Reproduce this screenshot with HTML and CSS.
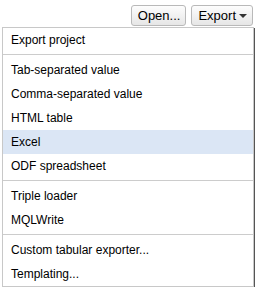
FILE: index.html
```html
<!DOCTYPE html>
<html lang="en">
  <head>
    <meta charset="UTF-8" />
    <title>Export</title>
    <link rel="stylesheet" href="styles.css">
  </head>
  <body>
    <div class="toolbar">
      <button class="btn">Open...</button>
      <button class="btn">Export<span class="caret"></span></button>
    </div>
    <div class="menu">
      <div class="menu-item">Export project</div>
      <hr class="menu-sep" />
      <div class="menu-item">Tab-separated value</div>
      <div class="menu-item">Comma-separated value</div>
      <div class="menu-item">HTML table</div>
      <div class="menu-item active">Excel</div>
      <div class="menu-item">ODF spreadsheet</div>
      <hr class="menu-sep" />
      <div class="menu-item">Triple loader</div>
      <div class="menu-item">MQLWrite</div>
      <hr class="menu-sep" />
      <div class="menu-item">Custom tabular exporter...</div>
      <div class="menu-item">Templating...</div>
    </div>
  </body>
</html>
```

FILE: styles.css
```css
* {
  box-sizing: border-box;
}

body {
  margin: 0;
  font-family: "Liberation Sans", Arial, sans-serif;
  font-size: 12px;
  color: #000;
  background: #fff;
  overflow: hidden;
}

.toolbar {
  display: flex;
  justify-content: flex-end;
  gap: 5px;
  padding: 5px 3px 0 0;
  height: 27px;
}

.btn {
  height: 21px;
  padding: 0 5px 0 6px;
  font-family: inherit;
  font-size: 13px;
  color: #000;
  border: 1px solid #b9b9b9;
  border-radius: 3px;
  background: linear-gradient(#fdfdfd, #e6e6e6);
  display: flex;
  align-items: center;
  gap: 3px;
}

.caret {
  width: 0;
  height: 0;
  border-left: 4px solid transparent;
  border-right: 4px solid transparent;
  border-top: 4px solid #333;
  margin-top: 1px;
}

.menu {
  margin-left: 2px;
  width: 252px;
  background: #fff;
  border: 1px solid #c8c8c8;
  box-shadow: 1px 1px 0 #555;
}

.menu-item {
  height: 24px;
  line-height: 24px;
  padding-left: 8px;
  white-space: nowrap;
}

.menu-item.active {
  background: #dbe6f5;
}

.menu-sep {
  border: 0;
  border-top: 1px solid #ccc;
  margin: 2px 0 3px;
}
```
